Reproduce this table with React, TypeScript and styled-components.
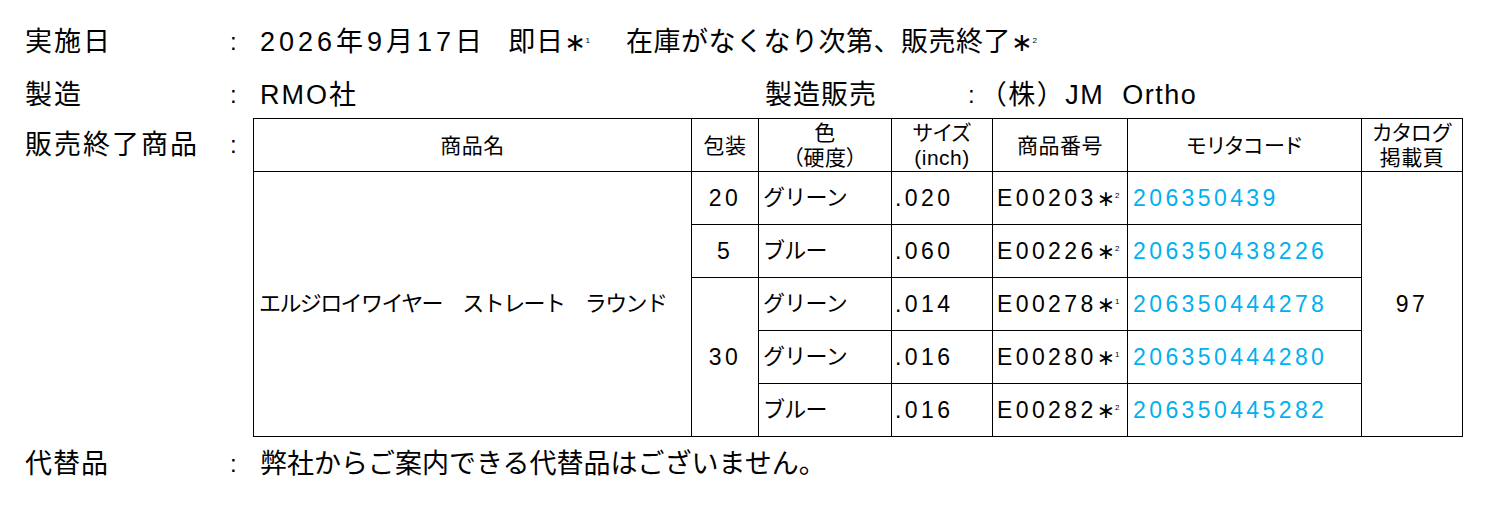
import React from "react";
import styled, { createGlobalStyle } from "styled-components";

const GlobalStyle = createGlobalStyle`
  html, body { margin: 0; padding: 0; background: #ffffff; }
  body {
    font-family: "Liberation Sans", "Noto Sans CJK JP", sans-serif;
    color: #000000;
  }
`;

const Sheet = styled.div`
  width: 1491px;
  box-sizing: border-box;
  padding: 15px 0 0 25px;
  display: flex;
  flex-direction: column;
`;

const Line = styled.div<{ $h?: number; $top?: boolean }>`
  display: grid;
  grid-template-columns: 205px 23px 1fr;
  align-items: ${(p) => (p.$top ? "start" : "center")};
  height: ${(p) => (p.$h ? `${p.$h}px` : "auto")};
  font-size: 27px;
  line-height: 32px;
`;

const Label = styled.div<{ $ls?: number }>`
  white-space: nowrap;
  letter-spacing: ${(p) => p.$ls ?? 2}px;
  height: 53px;
  display: flex;
  align-items: center;
`;

const Colon = styled.div`
  height: 53px;
  display: flex;
  align-items: center;
  font-size: 24px;
`;

const Value = styled.div`
  display: flex;
  align-items: center;
  padding-left: 7px;
  white-space: nowrap;
`;

const Text = styled.span<{ $ls?: number; $ml?: number }>`
  letter-spacing: ${(p) => p.$ls ?? 2}px;
  margin-left: ${(p) => p.$ml ?? 0}px;
  white-space: pre;
`;

const SubLabel = styled.span`
  letter-spacing: 1px;
  width: 203px;
`;

const SubColon = styled.span`
  font-size: 24px;
`;

const Spacer = styled.span<{ $w: number }>`
  display: inline-block;
  width: ${(p) => p.$w}px;
`;

const Star = styled.span`
  font-family: "DejaVu Sans", sans-serif;
  letter-spacing: 0;
  font-size: 0.95em;
`;

const Sup = styled.sup`
  font-size: 8px;
  letter-spacing: 0;
  vertical-align: 1em;
  line-height: 0;
`;

const Table = styled.table`
  border-collapse: collapse;
  table-layout: fixed;
  width: 1209px;
  font-size: 23px;
`;

const Th = styled.th<{ $w: number }>`
  width: ${(p) => p.$w - 1}px;
  height: 52px;
  border: 1px solid #000;
  padding: 0;
  font-weight: normal;
  font-size: 21px;
  line-height: 25px;
  font-feature-settings: "palt";
  letter-spacing: 0.5px;
  text-align: center;
  vertical-align: middle;
`;

const Td = styled.td<{ $align?: "left" | "center"; $pad?: number; $blue?: boolean; $kana?: boolean }>`
  height: 52px;
  border: 1px solid #000;
  padding: 0 0 0 ${(p) => p.$pad ?? 0}px;
  text-align: ${(p) => p.$align ?? "left"};
  vertical-align: middle;
  white-space: nowrap;
  font-size: ${(p) => (p.$kana ? "22px" : "23px")};
  letter-spacing: ${(p) => (p.$kana ? "-0.7px" : "3.4px")};
  color: ${(p) => (p.$blue ? "#00b0f0" : "#000")};
`;

const ProductName = styled(Td)`
  font-size: 22px;
  letter-spacing: -1.6px;
`;

type Row = {
  pack?: { text: string; span: number };
  color: string;
  size: string;
  code: string;
  note: string;
  morita: string;
};

const rows: Row[] = [
  { pack: { text: "20", span: 1 }, color: "グリーン", size: ".020", code: "E00203", note: "2", morita: "206350439" },
  { pack: { text: "5", span: 1 }, color: "ブルー", size: ".060", code: "E00226", note: "2", morita: "206350438226" },
  { pack: { text: "30", span: 3 }, color: "グリーン", size: ".014", code: "E00278", note: "1", morita: "206350444278" },
  { color: "グリーン", size: ".016", code: "E00280", note: "1", morita: "206350444280" },
  { color: "ブルー", size: ".016", code: "E00282", note: "2", morita: "206350445282" },
];

export default function App() {
  return (
    <>
      <GlobalStyle />
      <Sheet>
        <Line $h={53}>
          <Label>実施日</Label>
          <Colon>:</Colon>
          <Value>
            <Text $ls={4}>2026年9月17日</Text>
            <Text $ml={22} $ls={1}>
              即日<Star>∗</Star>
              <Sup>1</Sup>
            </Text>
            <Text $ls={0.5} $ml={36}>
              在庫がなくなり次第、販売終了<Star>∗</Star>
              <Sup>2</Sup>
            </Text>
          </Value>
        </Line>
        <Line $h={50}>
          <Label>製造</Label>
          <Colon>:</Colon>
          <Value>
            <Text>RMO社</Text>
            <Spacer $w={407} />
            <SubLabel>製造販売</SubLabel>
            <SubColon>:</SubColon>
            <Text $ml={5} $ls={1.5}>（株）JM  Ortho</Text>
          </Value>
        </Line>
        <Line $top>
          <Label>販売終了商品</Label>
          <Colon>:</Colon>
          <Table>
            <thead>
              <tr>
                <Th $w={438}>商品名</Th>
                <Th $w={67}>包装</Th>
                <Th $w={133}>
                  色<br />（硬度）
                </Th>
                <Th $w={101}>
                  サイズ<br />(inch)
                </Th>
                <Th $w={135}>商品番号</Th>
                <Th $w={234}>モリタコード</Th>
                <Th $w={101}>
                  カタログ<br />掲載頁
                </Th>
              </tr>
            </thead>
            <tbody>
              {rows.map((r, i) => (
                <tr key={r.code}>
                  {i === 0 && (
                    <ProductName rowSpan={5} $pad={5}>
                      エルジロイワイヤー　ストレート　ラウンド
                    </ProductName>
                  )}
                  {r.pack && (
                    <Td rowSpan={r.pack.span} $align="center">
                      {r.pack.text}
                    </Td>
                  )}
                  <Td $pad={4} $kana>
                    {r.color}
                  </Td>
                  <Td $pad={3}>{r.size}</Td>
                  <Td $pad={4}>
                    {r.code}
                    <Star>∗</Star>
                    <Sup>{r.note}</Sup>
                  </Td>
                  <Td $pad={5} $blue>
                    {r.morita}
                  </Td>
                  {i === 0 && (
                    <Td rowSpan={5} $align="center">
                      97
                    </Td>
                  )}
                </tr>
              ))}
            </tbody>
          </Table>
        </Line>
        <Line $h={54}>
          <Label $ls={1}>代替品</Label>
          <Colon>:</Colon>
          <Value>
            <Text $ls={0}>弊社からご案内できる代替品はございません。</Text>
          </Value>
        </Line>
      </Sheet>
    </>
  );
}
